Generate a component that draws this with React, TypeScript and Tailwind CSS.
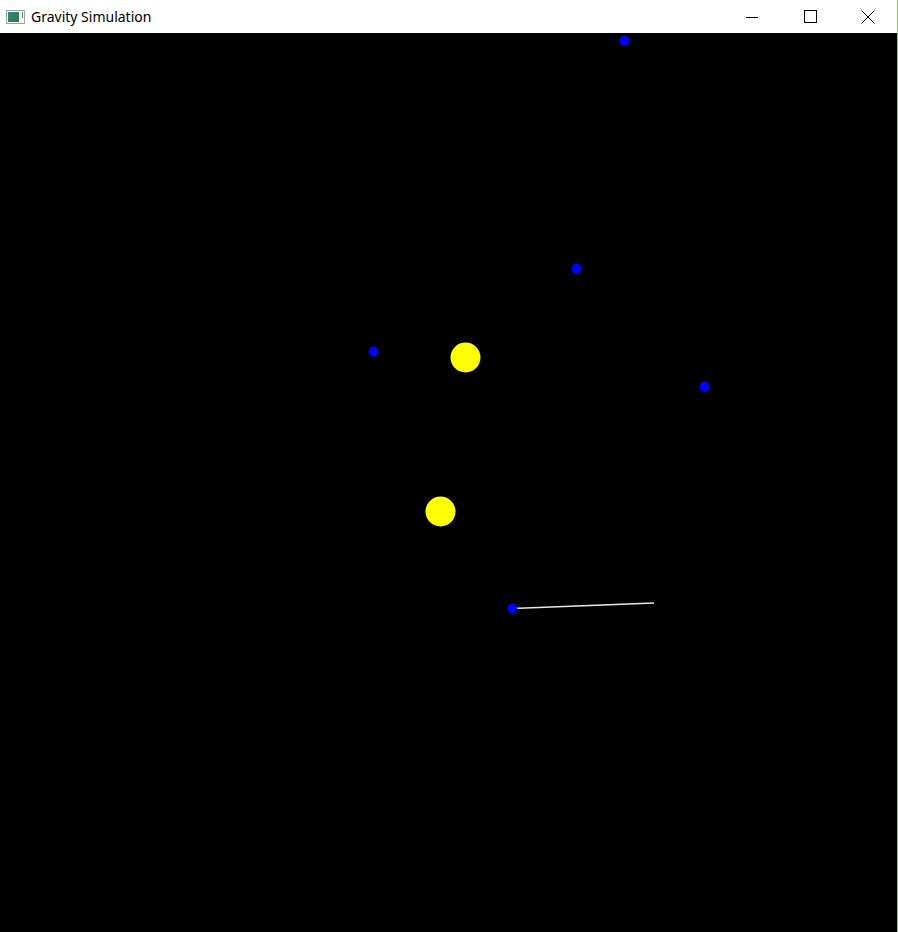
import React from "react";

const planets = [
  { x: 624.5, y: 40.5 },
  { x: 576.5, y: 268.5 },
  { x: 373.5, y: 351.5 },
  { x: 704.5, y: 386.5 },
  { x: 512.5, y: 608.5 },
];

const suns = [
  { x: 465.5, y: 357.5 },
  { x: 440.5, y: 511.5 },
];

function TitleBar() {
  return (
    <div className="flex h-[33px] items-center bg-white">
      <div className="ml-[6px] flex h-[14px] w-[19px] items-center border border-[#9aa3a8] bg-[#f4f6f7]">
        <div className="ml-[1px] h-[10px] w-[11px] bg-gradient-to-br from-[#2f8a8a] to-[#3a6f3a]" />
        <div className="ml-[3px] mt-[1px] h-[6px] w-[1px] self-start bg-[#6d8c8c]" />
      </div>
      <span className="ml-[6px] text-[14px] text-black" style={{ fontFamily: '"Segoe UI", "Noto Sans", "Open Sans", sans-serif' }}>
        Gravity Simulation
      </span>
      <div className="ml-auto flex h-full">
        <button className="flex h-full w-[58px] items-center justify-center">
          <svg width="12" height="12" viewBox="0 0 12 12">
            <path d="M0 6.5 H12" stroke="#000" strokeWidth="1" />
          </svg>
        </button>
        <button className="flex h-full w-[58px] items-center justify-center">
          <svg width="13" height="13" viewBox="0 0 13 13">
            <rect x="0.5" y="0.5" width="12" height="12" fill="none" stroke="#000" strokeWidth="1" />
          </svg>
        </button>
        <button className="flex h-full w-[58px] items-center justify-center">
          <svg width="14" height="14" viewBox="0 0 14 14">
            <path d="M0.5 0.5 L13.5 13.5 M13.5 0.5 L0.5 13.5" stroke="#000" strokeWidth="1" />
          </svg>
        </button>
      </div>
    </div>
  );
}

export default function App() {
  return (
    <div className="flex h-[932px] w-[898px] overflow-hidden">
      <div className="flex w-[897px] flex-col">
        <TitleBar />
        <div className="relative flex-1 bg-black">
          <svg className="absolute left-0 top-[-33px]" width="897" height="932" viewBox="0 0 897 932">
            <line x1="512.5" y1="608.5" x2="654" y2="603" stroke="#e8e8e8" strokeWidth="1.3" />
            {suns.map((s, i) => (
              <circle key={i} cx={s.x} cy={s.y} r="15" fill="#ffff00" />
            ))}
            {planets.map((p, i) => (
              <circle key={i} cx={p.x} cy={p.y} r="5" fill="#0000ff" />
            ))}
          </svg>
        </div>
      </div>
      <div className="w-[1px] bg-[#8cc63f]" />
    </div>
  );
}
